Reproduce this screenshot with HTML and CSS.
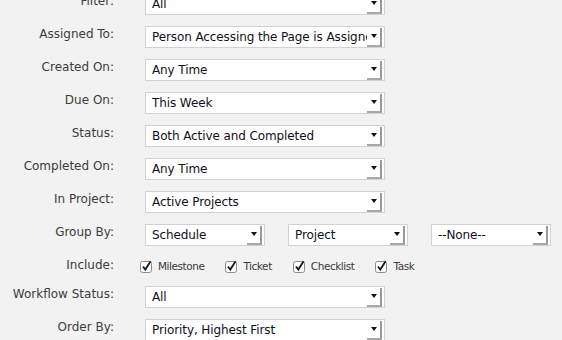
FILE: index.html
```html
<!DOCTYPE html>
<html>
<head>
<meta charset="utf-8">
<link rel="stylesheet" href="styles.css">
</head>
<body>
<div class="form">
  <div class="label">Filter:</div>
  <div class="field"><div class="select wide"><span class="text">All</span><span class="arrow"></span></div></div>

  <div class="label">Assigned To:</div>
  <div class="field"><div class="select wide"><span class="text">Person Accessing the Page is Assigned</span><span class="arrow"></span></div></div>

  <div class="label">Created On:</div>
  <div class="field"><div class="select wide"><span class="text">Any Time</span><span class="arrow"></span></div></div>

  <div class="label">Due On:</div>
  <div class="field"><div class="select wide"><span class="text">This Week</span><span class="arrow"></span></div></div>

  <div class="label">Status:</div>
  <div class="field"><div class="select wide"><span class="text">Both Active and Completed</span><span class="arrow"></span></div></div>

  <div class="label">Completed On:</div>
  <div class="field"><div class="select wide"><span class="text">Any Time</span><span class="arrow"></span></div></div>

  <div class="label">In Project:</div>
  <div class="field"><div class="select wide"><span class="text">Active Projects</span><span class="arrow"></span></div></div>

  <div class="label">Group By:</div>
  <div class="field group">
    <div class="select narrow"><span class="text">Schedule</span><span class="arrow"></span></div>
    <div class="select narrow"><span class="text">Project</span><span class="arrow"></span></div>
    <div class="select narrow"><span class="text">--None--</span><span class="arrow"></span></div>
  </div>

  <div class="label">Include:</div>
  <div class="field checks">
    <label class="check"><svg class="box" width="13" height="13" viewBox="0 0 13 13"><rect x="0.5" y="1.5" width="11" height="11" rx="2" fill="#fff" stroke="#8c8c8c"/><path d="M3 6.5 L5.3 9.6 L10.6 1.2" fill="none" stroke="#1a1a1a" stroke-width="1.8"/></svg><span>Milestone</span></label>
    <label class="check"><svg class="box" width="13" height="13" viewBox="0 0 13 13"><rect x="0.5" y="1.5" width="11" height="11" rx="2" fill="#fff" stroke="#8c8c8c"/><path d="M3 6.5 L5.3 9.6 L10.6 1.2" fill="none" stroke="#1a1a1a" stroke-width="1.8"/></svg><span>Ticket</span></label>
    <label class="check"><svg class="box" width="13" height="13" viewBox="0 0 13 13"><rect x="0.5" y="1.5" width="11" height="11" rx="2" fill="#fff" stroke="#8c8c8c"/><path d="M3 6.5 L5.3 9.6 L10.6 1.2" fill="none" stroke="#1a1a1a" stroke-width="1.8"/></svg><span>Checklist</span></label>
    <label class="check"><svg class="box" width="13" height="13" viewBox="0 0 13 13"><rect x="0.5" y="1.5" width="11" height="11" rx="2" fill="#fff" stroke="#8c8c8c"/><path d="M3 6.5 L5.3 9.6 L10.6 1.2" fill="none" stroke="#1a1a1a" stroke-width="1.8"/></svg><span>Task</span></label>
  </div>

  <div class="label">Workflow Status:</div>
  <div class="field"><div class="select wide"><span class="text">All</span><span class="arrow"></span></div></div>

  <div class="label">Order By:</div>
  <div class="field"><div class="select wide"><span class="text">Priority, Highest First</span><span class="arrow"></span></div></div>
</div>
</body>
</html>
```

FILE: styles.css
```css
html, body {
  margin: 0;
  padding: 0;
  background: #f2f2f2;
  font-family: "DejaVu Sans", "Liberation Sans", sans-serif;
  overflow: hidden;
}

.form {
  display: grid;
  grid-template-columns: 114px 1fr;
  column-gap: 31px;
  row-gap: 11px;
  margin-top: -7px;
}

.label {
  text-align: right;
  font-size: 12px;
  line-height: 15px;
  color: #3c3c3c;
  padding-top: 1px;
  white-space: nowrap;
}

.field {
  display: flex;
}

.group {
  gap: 23px;
}

.select {
  box-sizing: border-box;
  height: 22px;
  border: 1px solid #d2d2d2;
  background: #fff;
  display: flex;
  align-items: flex-start;
  padding-left: 6px;
  font-size: 12px;
  letter-spacing: -0.1px;
  color: #10101c;
}

.select.wide {
  width: 240px;
}

.select.narrow {
  width: 120px;
}

.select .text {
  flex: 1;
  min-width: 0;
  overflow: hidden;
  white-space: nowrap;
  line-height: 21px;
}

.select .arrow {
  flex: none;
  box-sizing: border-box;
  width: 15px;
  height: 19px;
  margin: 1px 2px 0 0;
  background: #fff;
  border-right: 2px solid #9a9a9a;
  border-bottom: 2px solid #a8a8a8;
  display: flex;
  justify-content: center;
  padding-top: 6px;
}

.select .arrow::before {
  content: "";
  width: 0;
  height: 0;
  border-left: 3.5px solid transparent;
  border-right: 3.5px solid transparent;
  border-top: 4px solid #111;
}

.checks {
  height: 18px;
  align-items: center;
  gap: 21px;
  margin-left: -5px;
}

.check {
  display: flex;
  align-items: center;
  gap: 5px;
  font-size: 10.5px;
  letter-spacing: -0.45px;
  color: #3a3a3a;
}

.check .box {
  display: block;
}
```
